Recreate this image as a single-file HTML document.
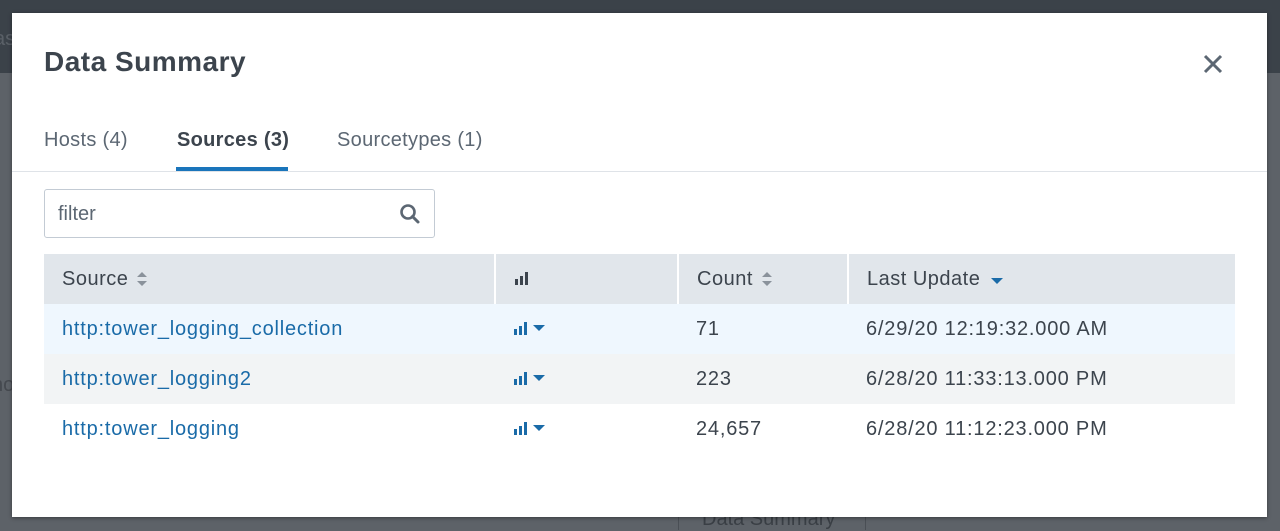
<!DOCTYPE html>
<html><head><meta charset="utf-8"><style>
*{margin:0;padding:0;box-sizing:border-box}
body{width:1280px;height:530px;overflow:hidden;font-family:"Liberation Sans",sans-serif;background:#5d6268;position:relative}
.top{position:absolute;left:0;top:0;width:1280px;height:73px;background:#3b4249}
.ghost{position:absolute;color:#3e434a;font-size:20px}
.modal{position:absolute;left:12px;top:13px;width:1255px;height:504px;background:#fff;box-shadow:0 1px 4px rgba(0,0,0,.4)}
h1{position:absolute;left:32px;top:33px;font-size:28px;font-weight:bold;color:#3c444d;letter-spacing:0.5px}
.x{position:absolute;left:1190px;top:40px}
.tab{position:absolute;top:116px;font-size:20px;color:#5c6773;letter-spacing:0.3px}
.tab.a{color:#3c444d;font-weight:bold}
.ul{position:absolute;left:164px;top:154px;width:112px;height:4px;background:#1a75bb}
.hr{position:absolute;left:0;top:158px;width:1255px;height:1px;background:#dfe3e8}
.filter{position:absolute;left:32px;top:176px;width:391px;height:49px;border:1px solid #c3cbd4;border-radius:3px}
.filter span{position:absolute;left:13px;top:13px;font-size:20px;color:#5c6773}
table{position:absolute;left:32px;top:241px;width:1191px;border-collapse:collapse;font-size:20px;letter-spacing:0.8px}
th{background:#e1e6eb;height:50px;text-align:left;font-weight:normal;color:#3c444d;padding-left:18px;border-right:2px solid #fff;letter-spacing:0.5px}
th:last-child{border-right:none}
td{height:50px;padding-left:18px;color:#3c444d}
td a{color:#1a6ba8;text-decoration:none}
tr.r1 td{background:#eff7fe}
tr.r2 td{background:#f2f4f5}
.sort{display:inline-block;vertical-align:middle;margin-left:8px}
</style></head><body>
<div class="top"></div>
<div class="ghost" style="left:-6px;top:28px;color:#5a6067">as</div>
<div class="ghost" style="left:-8px;top:374px;color:#45494f">no</div>
<div style="position:absolute;left:678px;top:517px;width:188px;height:13px;border-left:1px solid #4a4f55;border-right:1px solid #4a4f55"></div>
<div class="ghost" style="left:702px;top:508px;font-size:20px;color:#3a3f45">Data Summary</div>
<div class="modal">
<h1>Data Summary</h1>
<svg class="x" width="22" height="22" viewBox="0 0 22 22"><path d="M3 3L19 19M19 3L3 19" stroke="#5c6773" stroke-width="3"/></svg>
<div class="tab" style="left:32px">Hosts (4)</div>
<div class="tab a" style="left:165px">Sources (3)</div>
<div class="tab" style="left:325px">Sourcetypes (1)</div>
<div class="ul"></div>
<div class="hr"></div>
<div class="filter"><span>filter</span>
<svg style="position:absolute;left:354px;top:13px" width="22" height="22" viewBox="0 0 22 22"><circle cx="9" cy="9" r="6.5" stroke="#5c6773" stroke-width="2.6" fill="none"/><path d="M13.5 13.5L19 19" stroke="#5c6773" stroke-width="3" stroke-linecap="round"/></svg></div>
<table>
<tr><th style="width:451px">Source<svg class="sort" width="12" height="18" viewBox="0 0 12 18"><path d="M1 7L6 2L11 7ZM1 11L6 16L11 11Z" fill="#8a929b"/></svg></th>
<th style="width:183px"><svg width="16" height="14" viewBox="0 0 16 14"><rect x="1" y="8" width="3" height="6" fill="#3c444d"/><rect x="6" y="5" width="3" height="9" fill="#3c444d"/><rect x="11" y="1" width="3" height="13" fill="#3c444d"/></svg></th>
<th style="width:170px">Count<svg class="sort" width="12" height="18" viewBox="0 0 12 18"><path d="M1 7L6 2L11 7ZM1 11L6 16L11 11Z" fill="#8a929b"/></svg></th>
<th>Last Update<svg class="sort" width="14" height="18" viewBox="0 0 14 18" style="margin-left:10px"><path d="M1 8L7 14L13 8Z" fill="#1a6ba8"/></svg></th></tr>
<tr class="r1"><td><a>http:tower_logging_collection</a></td><td><svg width="34" height="14" viewBox="0 0 34 14"><rect x="1" y="8" width="3" height="6" fill="#1a6ba8"/><rect x="6" y="5" width="3" height="9" fill="#1a6ba8"/><rect x="11" y="1" width="3" height="13" fill="#1a6ba8"/><path d="M20 4L32 4L26 10Z" fill="#1a6ba8"/></svg></td><td>71</td><td>6/29/20 12:19:32.000 AM</td></tr>
<tr class="r2"><td><a>http:tower_logging2</a></td><td><svg width="34" height="14" viewBox="0 0 34 14"><rect x="1" y="8" width="3" height="6" fill="#1a6ba8"/><rect x="6" y="5" width="3" height="9" fill="#1a6ba8"/><rect x="11" y="1" width="3" height="13" fill="#1a6ba8"/><path d="M20 4L32 4L26 10Z" fill="#1a6ba8"/></svg></td><td>223</td><td>6/28/20 11:33:13.000 PM</td></tr>
<tr><td><a>http:tower_logging</a></td><td><svg width="34" height="14" viewBox="0 0 34 14"><rect x="1" y="8" width="3" height="6" fill="#1a6ba8"/><rect x="6" y="5" width="3" height="9" fill="#1a6ba8"/><rect x="11" y="1" width="3" height="13" fill="#1a6ba8"/><path d="M20 4L32 4L26 10Z" fill="#1a6ba8"/></svg></td><td>24,657</td><td>6/28/20 11:12:23.000 PM</td></tr>
</table>
</div>
</body></html>
